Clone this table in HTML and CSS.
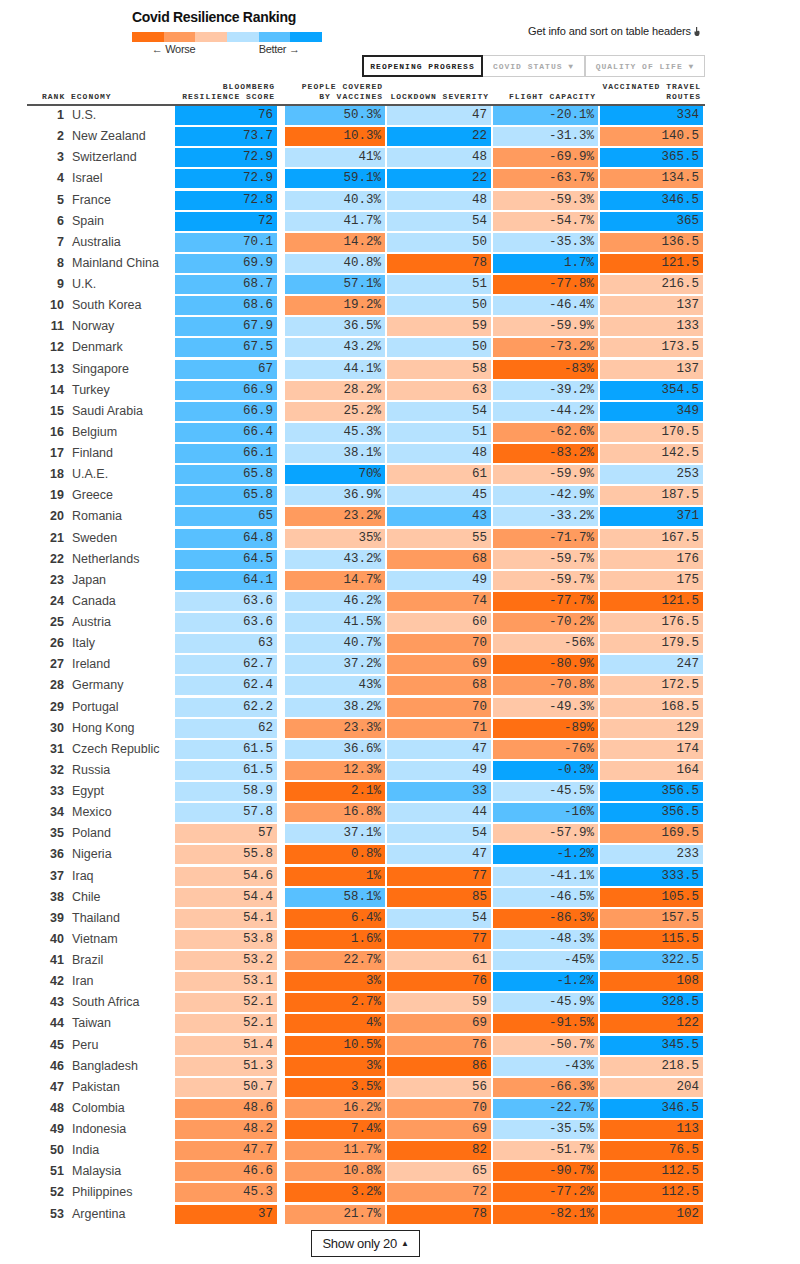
FILE: index.html
```html
<!DOCTYPE html>
<html lang="en">
<head>
<meta charset="utf-8">
<title>Covid Resilience Ranking</title>
<link rel="stylesheet" href="styles.css">
</head>
<body>
<div class="wrap">
  <div class="top">
    <div class="brand">
      <h1 class="title">Covid Resilience Ranking</h1>
      <div class="legend-bar">
        <span class="o3"></span><span class="o2"></span><span class="o1"></span><span class="b1"></span><span class="b2"></span><span class="b3"></span>
      </div>
      <div class="legend-labels">
        <span class="worse">← Worse</span>
        <span class="better">Better →</span>
      </div>
    </div>
    <div class="info">Get info and sort on table headers
      <svg class="hand" width="6" height="9" viewBox="0 0 6 9"><path d="M2 0h1.2v4.2l.6-.5h.8l.9.7v2.6L4.4 9H1.8L.5 7.3V4.6l.7-.3.8.6z" fill="#444"/></svg>
    </div>
  </div>
  <div class="tabs">
    <span class="tab active">REOPENING PROGRESS</span>
    <span class="tab covid">COVID STATUS ▼</span>
    <span class="tab quality">QUALITY OF LIFE ▼</span>
  </div>
  <div class="thead">
    <span class="h-rank">RANK ECONOMY</span>
    <span class="h">BLOOMBERG<br>RESILIENCE SCORE</span>
    <span class="h">PEOPLE COVERED<br>BY VACCINES</span>
    <span class="h">LOCKDOWN SEVERITY</span>
    <span class="h">FLIGHT CAPACITY</span>
    <span class="h">VACCINATED TRAVEL<br>ROUTES</span>
  </div>
  <div class="tbody">
    <div class="row"><span class="rk">1</span><span class="ec">U.S.</span><span class="v b3">76</span><span class="v b2">50.3%</span><span class="v b1">47</span><span class="v b2">-20.1%</span><span class="v b3">334</span></div>
    <div class="row"><span class="rk">2</span><span class="ec">New Zealand</span><span class="v b3">73.7</span><span class="v o3">10.3%</span><span class="v b3">22</span><span class="v b1">-31.3%</span><span class="v o2">140.5</span></div>
    <div class="row"><span class="rk">3</span><span class="ec">Switzerland</span><span class="v b3">72.9</span><span class="v b1">41%</span><span class="v b1">48</span><span class="v o2">-69.9%</span><span class="v b3">365.5</span></div>
    <div class="row"><span class="rk">4</span><span class="ec">Israel</span><span class="v b3">72.9</span><span class="v b3">59.1%</span><span class="v b3">22</span><span class="v o2">-63.7%</span><span class="v o2">134.5</span></div>
    <div class="row"><span class="rk">5</span><span class="ec">France</span><span class="v b3">72.8</span><span class="v b1">40.3%</span><span class="v b1">48</span><span class="v o1">-59.3%</span><span class="v b3">346.5</span></div>
    <div class="row"><span class="rk">6</span><span class="ec">Spain</span><span class="v b3">72</span><span class="v b1">41.7%</span><span class="v b1">54</span><span class="v o1">-54.7%</span><span class="v b3">365</span></div>
    <div class="row"><span class="rk">7</span><span class="ec">Australia</span><span class="v b2">70.1</span><span class="v o2">14.2%</span><span class="v b1">50</span><span class="v b1">-35.3%</span><span class="v o2">136.5</span></div>
    <div class="row"><span class="rk">8</span><span class="ec">Mainland China</span><span class="v b2">69.9</span><span class="v b1">40.8%</span><span class="v o3">78</span><span class="v b3">1.7%</span><span class="v o3">121.5</span></div>
    <div class="row"><span class="rk">9</span><span class="ec">U.K.</span><span class="v b2">68.7</span><span class="v b2">57.1%</span><span class="v b1">51</span><span class="v o3">-77.8%</span><span class="v o1">216.5</span></div>
    <div class="row"><span class="rk">10</span><span class="ec">South Korea</span><span class="v b2">68.6</span><span class="v o2">19.2%</span><span class="v b1">50</span><span class="v b1">-46.4%</span><span class="v o1">137</span></div>
    <div class="row"><span class="rk">11</span><span class="ec">Norway</span><span class="v b2">67.9</span><span class="v b1">36.5%</span><span class="v o1">59</span><span class="v o1">-59.9%</span><span class="v o1">133</span></div>
    <div class="row"><span class="rk">12</span><span class="ec">Denmark</span><span class="v b2">67.5</span><span class="v b1">43.2%</span><span class="v b1">50</span><span class="v o2">-73.2%</span><span class="v o1">173.5</span></div>
    <div class="row"><span class="rk">13</span><span class="ec">Singapore</span><span class="v b2">67</span><span class="v b1">44.1%</span><span class="v o1">58</span><span class="v o3">-83%</span><span class="v o1">137</span></div>
    <div class="row"><span class="rk">14</span><span class="ec">Turkey</span><span class="v b2">66.9</span><span class="v o1">28.2%</span><span class="v o1">63</span><span class="v b1">-39.2%</span><span class="v b3">354.5</span></div>
    <div class="row"><span class="rk">15</span><span class="ec">Saudi Arabia</span><span class="v b2">66.9</span><span class="v o1">25.2%</span><span class="v b1">54</span><span class="v b1">-44.2%</span><span class="v b3">349</span></div>
    <div class="row"><span class="rk">16</span><span class="ec">Belgium</span><span class="v b2">66.4</span><span class="v b1">45.3%</span><span class="v b1">51</span><span class="v o2">-62.6%</span><span class="v o1">170.5</span></div>
    <div class="row"><span class="rk">17</span><span class="ec">Finland</span><span class="v b2">66.1</span><span class="v b1">38.1%</span><span class="v b1">48</span><span class="v o3">-83.2%</span><span class="v o1">142.5</span></div>
    <div class="row"><span class="rk">18</span><span class="ec">U.A.E.</span><span class="v b2">65.8</span><span class="v b3">70%</span><span class="v o1">61</span><span class="v o1">-59.9%</span><span class="v b1">253</span></div>
    <div class="row"><span class="rk">19</span><span class="ec">Greece</span><span class="v b2">65.8</span><span class="v b1">36.9%</span><span class="v b1">45</span><span class="v b1">-42.9%</span><span class="v o1">187.5</span></div>
    <div class="row"><span class="rk">20</span><span class="ec">Romania</span><span class="v b2">65</span><span class="v o2">23.2%</span><span class="v b2">43</span><span class="v b1">-33.2%</span><span class="v b3">371</span></div>
    <div class="row"><span class="rk">21</span><span class="ec">Sweden</span><span class="v b2">64.8</span><span class="v o1">35%</span><span class="v o1">55</span><span class="v o2">-71.7%</span><span class="v o1">167.5</span></div>
    <div class="row"><span class="rk">22</span><span class="ec">Netherlands</span><span class="v b2">64.5</span><span class="v b1">43.2%</span><span class="v o2">68</span><span class="v o1">-59.7%</span><span class="v o1">176</span></div>
    <div class="row"><span class="rk">23</span><span class="ec">Japan</span><span class="v b2">64.1</span><span class="v o2">14.7%</span><span class="v b1">49</span><span class="v o1">-59.7%</span><span class="v o1">175</span></div>
    <div class="row"><span class="rk">24</span><span class="ec">Canada</span><span class="v b1">63.6</span><span class="v b1">46.2%</span><span class="v o2">74</span><span class="v o3">-77.7%</span><span class="v o3">121.5</span></div>
    <div class="row"><span class="rk">25</span><span class="ec">Austria</span><span class="v b1">63.6</span><span class="v b1">41.5%</span><span class="v o1">60</span><span class="v o2">-70.2%</span><span class="v o1">176.5</span></div>
    <div class="row"><span class="rk">26</span><span class="ec">Italy</span><span class="v b1">63</span><span class="v b1">40.7%</span><span class="v o2">70</span><span class="v o1">-56%</span><span class="v o1">179.5</span></div>
    <div class="row"><span class="rk">27</span><span class="ec">Ireland</span><span class="v b1">62.7</span><span class="v b1">37.2%</span><span class="v o2">69</span><span class="v o3">-80.9%</span><span class="v b1">247</span></div>
    <div class="row"><span class="rk">28</span><span class="ec">Germany</span><span class="v b1">62.4</span><span class="v b1">43%</span><span class="v o2">68</span><span class="v o2">-70.8%</span><span class="v o1">172.5</span></div>
    <div class="row"><span class="rk">29</span><span class="ec">Portugal</span><span class="v b1">62.2</span><span class="v b1">38.2%</span><span class="v o2">70</span><span class="v o1">-49.3%</span><span class="v o1">168.5</span></div>
    <div class="row"><span class="rk">30</span><span class="ec">Hong Kong</span><span class="v b1">62</span><span class="v o2">23.3%</span><span class="v o2">71</span><span class="v o3">-89%</span><span class="v o1">129</span></div>
    <div class="row"><span class="rk">31</span><span class="ec">Czech Republic</span><span class="v b1">61.5</span><span class="v b1">36.6%</span><span class="v b1">47</span><span class="v o2">-76%</span><span class="v o1">174</span></div>
    <div class="row"><span class="rk">32</span><span class="ec">Russia</span><span class="v b1">61.5</span><span class="v o2">12.3%</span><span class="v b1">49</span><span class="v b3">-0.3%</span><span class="v o1">164</span></div>
    <div class="row"><span class="rk">33</span><span class="ec">Egypt</span><span class="v b1">58.9</span><span class="v o3">2.1%</span><span class="v b2">33</span><span class="v b1">-45.5%</span><span class="v b3">356.5</span></div>
    <div class="row"><span class="rk">34</span><span class="ec">Mexico</span><span class="v b1">57.8</span><span class="v o2">16.8%</span><span class="v b1">44</span><span class="v b2">-16%</span><span class="v b3">356.5</span></div>
    <div class="row"><span class="rk">35</span><span class="ec">Poland</span><span class="v o1">57</span><span class="v b1">37.1%</span><span class="v b1">54</span><span class="v o1">-57.9%</span><span class="v o2">169.5</span></div>
    <div class="row"><span class="rk">36</span><span class="ec">Nigeria</span><span class="v o1">55.8</span><span class="v o3">0.8%</span><span class="v b1">47</span><span class="v b3">-1.2%</span><span class="v b1">233</span></div>
    <div class="row"><span class="rk">37</span><span class="ec">Iraq</span><span class="v o1">54.6</span><span class="v o3">1%</span><span class="v o3">77</span><span class="v b1">-41.1%</span><span class="v b3">333.5</span></div>
    <div class="row"><span class="rk">38</span><span class="ec">Chile</span><span class="v o1">54.4</span><span class="v b2">58.1%</span><span class="v o3">85</span><span class="v b1">-46.5%</span><span class="v o3">105.5</span></div>
    <div class="row"><span class="rk">39</span><span class="ec">Thailand</span><span class="v o1">54.1</span><span class="v o3">6.4%</span><span class="v b1">54</span><span class="v o3">-86.3%</span><span class="v o2">157.5</span></div>
    <div class="row"><span class="rk">40</span><span class="ec">Vietnam</span><span class="v o1">53.8</span><span class="v o3">1.6%</span><span class="v o3">77</span><span class="v b1">-48.3%</span><span class="v o3">115.5</span></div>
    <div class="row"><span class="rk">41</span><span class="ec">Brazil</span><span class="v o1">53.2</span><span class="v o2">22.7%</span><span class="v o1">61</span><span class="v b1">-45%</span><span class="v b2">322.5</span></div>
    <div class="row"><span class="rk">42</span><span class="ec">Iran</span><span class="v o1">53.1</span><span class="v o3">3%</span><span class="v o3">76</span><span class="v b3">-1.2%</span><span class="v o3">108</span></div>
    <div class="row"><span class="rk">43</span><span class="ec">South Africa</span><span class="v o1">52.1</span><span class="v o3">2.7%</span><span class="v o1">59</span><span class="v b1">-45.9%</span><span class="v b3">328.5</span></div>
    <div class="row"><span class="rk">44</span><span class="ec">Taiwan</span><span class="v o1">52.1</span><span class="v o3">4%</span><span class="v o2">69</span><span class="v o3">-91.5%</span><span class="v o3">122</span></div>
    <div class="row"><span class="rk">45</span><span class="ec">Peru</span><span class="v o1">51.4</span><span class="v o3">10.5%</span><span class="v o2">76</span><span class="v o1">-50.7%</span><span class="v b3">345.5</span></div>
    <div class="row"><span class="rk">46</span><span class="ec">Bangladesh</span><span class="v o1">51.3</span><span class="v o3">3%</span><span class="v o3">86</span><span class="v b1">-43%</span><span class="v o1">218.5</span></div>
    <div class="row"><span class="rk">47</span><span class="ec">Pakistan</span><span class="v o1">50.7</span><span class="v o3">3.5%</span><span class="v o1">56</span><span class="v o2">-66.3%</span><span class="v o1">204</span></div>
    <div class="row"><span class="rk">48</span><span class="ec">Colombia</span><span class="v o2">48.6</span><span class="v o2">16.2%</span><span class="v o2">70</span><span class="v b2">-22.7%</span><span class="v b3">346.5</span></div>
    <div class="row"><span class="rk">49</span><span class="ec">Indonesia</span><span class="v o2">48.2</span><span class="v o3">7.4%</span><span class="v o2">69</span><span class="v b1">-35.5%</span><span class="v o3">113</span></div>
    <div class="row"><span class="rk">50</span><span class="ec">India</span><span class="v o2">47.7</span><span class="v o2">11.7%</span><span class="v o3">82</span><span class="v o1">-51.7%</span><span class="v o3">76.5</span></div>
    <div class="row"><span class="rk">51</span><span class="ec">Malaysia</span><span class="v o2">46.6</span><span class="v o2">10.8%</span><span class="v o1">65</span><span class="v o3">-90.7%</span><span class="v o3">112.5</span></div>
    <div class="row"><span class="rk">52</span><span class="ec">Philippines</span><span class="v o2">45.3</span><span class="v o3">3.2%</span><span class="v o2">72</span><span class="v o3">-77.2%</span><span class="v o3">112.5</span></div>
    <div class="row"><span class="rk">53</span><span class="ec">Argentina</span><span class="v o3">37</span><span class="v o2">21.7%</span><span class="v o3">78</span><span class="v o3">-82.1%</span><span class="v o3">102</span></div>
  </div>
  <button class="more" type="button">Show only 20 <span class="tri">▲</span></button>
</div>
</body>
</html>
```

FILE: styles.css
```css
* { box-sizing: border-box; }
html, body { margin: 0; padding: 0; background: #fff; }
body { font-family: "Liberation Sans", Arial, sans-serif; color: #333; }

.wrap { width: 678px; margin-left: 27px; }

.top { display: flex; justify-content: space-between; align-items: flex-start; }
.brand { padding-left: 105px; }
.title {
  margin: 9px 0 0; font-size: 14px; line-height: 16px; font-weight: 700;
  letter-spacing: -0.3px; color: #111;
}
.legend-bar {
  display: grid; grid-template-columns: repeat(6, 31.667px);
  height: 10px; margin-top: 7px;
}
.legend-labels {
  display: grid; grid-template-columns: repeat(6, 31.667px);
  margin-top: 1px; font-size: 11px; line-height: 12px; color: #333; letter-spacing: -0.3px;
}
.worse { grid-column: 1 / 3; text-align: right; }
.better { grid-column: 5 / 7; }

.info {
  margin-top: 25px; padding-right: 5px; font-size: 11px; line-height: 13px;
  color: #222; letter-spacing: -0.1px; display: flex; align-items: center; gap: 3px;
}
.hand { display: block; }

.tabs { display: flex; justify-content: flex-end; }
.tab {
  height: 22px; display: flex; align-items: center; justify-content: center;
  font-family: "Liberation Mono", monospace; font-size: 8px; font-weight: 700;
  letter-spacing: 1px; white-space: nowrap;
}
.tab.active { width: 121px; border: 2px solid #222; color: #222; }
.tab.covid { width: 102px; border: 1px solid #ccc; border-left: none; color: #aaa; }
.tab.quality { width: 120px; border: 1px solid #ccc; color: #aaa; }

.thead, .row {
  display: grid;
  grid-template-columns: 37px 107px 102px 106px 104px 105px 103px;
  column-gap: 2px;
}
.thead {
  height: 29px; align-items: end; padding-bottom: 2px;
  border-bottom: 2px solid #555;
  font-family: "Liberation Mono", monospace; font-size: 8px; font-weight: 700;
  line-height: 10px; letter-spacing: 1px; color: #333;
}
.h-rank { grid-column: 1 / 3; padding-left: 15px; }
.h { text-align: right; padding-right: 2px; white-space: nowrap; }
.thead > :nth-child(3), .row > :nth-child(4) { margin-left: 6px; }

.tbody { display: flex; flex-direction: column; gap: 2.125px; }
.row { height: 19px; line-height: 19px; }
.rk { text-align: right; font-size: 12.5px; font-weight: 700; color: #3a3a3a; }
.ec { padding-left: 6px; font-size: 12.5px; color: #444; white-space: nowrap; }
.v {
  text-align: right; padding-right: 4px;
  font-family: "Liberation Mono", monospace; font-size: 12.5px; color: #333;
}

.o3 { background: #ff6f12; }
.o2 { background: #ff9b5e; }
.o1 { background: #ffc7a6; }
.b1 { background: #b5e2ff; }
.b2 { background: #58c0ff; }
.b3 { background: #08a4ff; }

.more {
  display: flex; align-items: center; justify-content: center; gap: 4px;
  width: 109px; height: 27px; margin: 6px 0 0 284px;
  border: 1.5px solid #222; background: #fff; border-radius: 0; padding: 0;
  font-family: "Liberation Sans", Arial, sans-serif; font-size: 13px;
  letter-spacing: -0.3px; color: #222;
}
.tri { font-size: 8px; }
```
